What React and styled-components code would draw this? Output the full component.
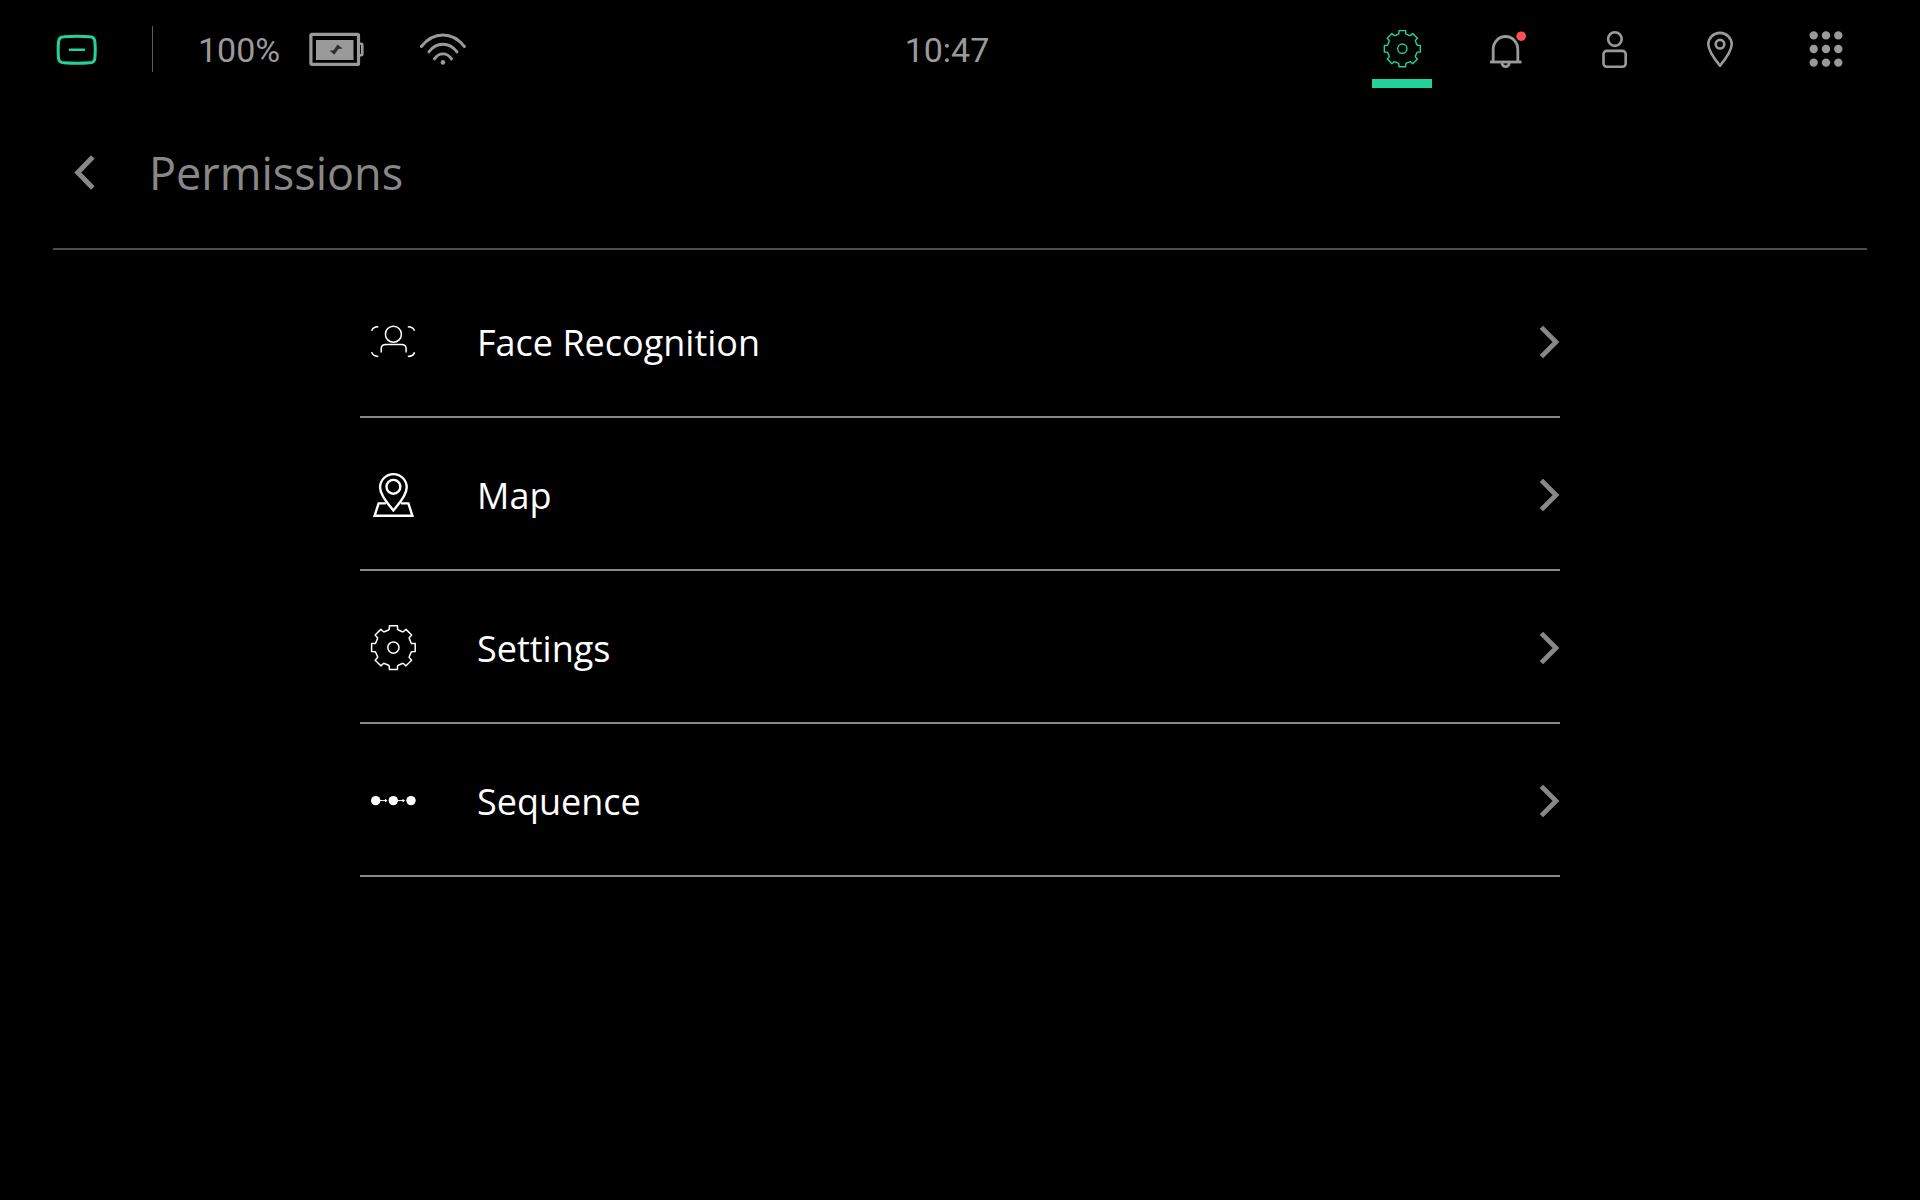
import React from "react";
import styled, { createGlobalStyle, css } from "styled-components";

const colors = {
  accent: "#24d39b",
  icon: "#9a9a9a",
  muted: "#888888",
  alert: "#ff4f4f",
};

const GlobalStyle = createGlobalStyle`
  *, *::before, *::after { box-sizing: border-box; }
  body {
    margin: 0;
    background: #000;
    color: #fff;
    font-family: "Open Sans", "Noto Sans", sans-serif;
  }
  svg { display: block; flex: none; }
`;

const plainButton = css`
  margin: 0;
  padding: 0;
  border: 0;
  background: none;
  color: inherit;
  font: inherit;
  cursor: pointer;
`;

const StatusBar = styled.header`
  display: grid;
  grid-template-columns: 1fr auto 1fr;
  align-items: center;
  height: 98px;
  padding: 0 64px 0 38px;
  color: ${colors.icon};
`;

const StatusGroup = styled.div`
  display: flex;
  align-items: center;
`;

const Reading = styled.span`
  padding-top: 2px;
  font-family: Roboto, sans-serif;
  font-size: 34px;
  line-height: 40px;
`;

const HomeButton = styled.button`
  ${plainButton}
  display: grid;
  place-items: center;
  width: 78px;
  height: 98px;
  color: ${colors.accent};
`;

const Divider = styled.span`
  width: 1px;
  height: 46px;
  margin: 0 45px 0 36px;
  background: #5a5a5a;
`;

const Indicators = styled.div`
  display: flex;
  align-items: center;
  gap: 56px;
`;

const Battery = styled.div`
  display: flex;
  align-items: center;
  gap: 29px;
`;

const NavBar = styled.nav`
  display: flex;
  justify-content: flex-end;
  gap: 46px;
`;

const NavButton = styled.button`
  ${plainButton}
  position: relative;
  display: grid;
  place-items: center;
  width: 60px;
  height: 98px;
  color: ${(p) => (p.$active ? colors.accent : "inherit")};

  &::after {
    content: "";
    display: ${(p) => (p.$active ? "block" : "none")};
    position: absolute;
    inset: auto 0 10px;
    height: 9px;
    background: currentColor;
  }
`;

const TitleBar = styled.div`
  display: flex;
  align-items: center;
  gap: 32px;
  height: 152px;
  margin: 0 53px;
  border-bottom: 2px solid #4d4d4d;
  color: ${colors.muted};
`;

const BackButton = styled.button`
  ${plainButton}
  display: grid;
  place-items: center;
  width: 64px;
  height: 64px;
`;

const Title = styled.h1`
  margin: 0;
  font-size: 45px;
  font-weight: 400;
  line-height: 64px;
`;

const List = styled.ul`
  max-width: 1200px;
  margin: 15px auto 0;
  padding: 0;
  list-style: none;
`;

const Item = styled.li`
  border-bottom: 2px solid ${colors.muted};
`;

const ItemButton = styled.button`
  ${plainButton}
  display: flex;
  align-items: center;
  gap: 61px;
  width: 100%;
  height: 151px;
  padding: 2px 0 0 10px;
  text-align: left;
`;

const ItemLabel = styled.span`
  flex: 1;
  padding-top: 2px;
  font-size: 36px;
  line-height: 48px;
`;

const Chevron = styled.svg`
  color: ${colors.muted};
`;

const round = (n) => Math.round(n * 100) / 100;

const gearTooth = [
  [-4.9, -17.6],
  [-4.2, -18.2],
  [-4, -21.8],
  [4, -21.8],
  [4.2, -18.2],
  [4.9, -17.6],
];

const gearPath =
  "M" +
  Array.from({ length: 8 }, (_, i) => {
    const a = (i * Math.PI) / 4;
    return gearTooth
      .map(([x, y]) => [
        round(x * Math.cos(a) - y * Math.sin(a)),
        round(x * Math.sin(a) + y * Math.cos(a)),
      ])
      .join("L");
  }).join("L") +
  "Z";

function GearIcon({ size, stroke }) {
  return (
    <svg width={size} height={size} viewBox="-23.4 -22.6 46 46" fill="none" stroke="currentColor" strokeWidth={stroke} strokeLinejoin="round" aria-hidden="true">
      <path d={gearPath} />
      <circle r="5.6" />
    </svg>
  );
}

function HomeIcon() {
  return (
    <svg width="42" height="32" viewBox="0 0 42 32" fill="none" stroke="currentColor" strokeWidth="3" strokeLinecap="round" aria-hidden="true">
      <path d="M8 3.8Q21 2.8 34 3.8Q38.6 4 38.9 9Q39.6 17 38.9 25Q38.6 29.6 34 29.8Q21 30.8 8 29.8Q2.8 29.6 2.5 25Q1.8 17 2.5 9Q2.8 4 8 3.8Z" />
      <path d="M14 16.8h14" strokeWidth="2.6" />
    </svg>
  );
}

function BatteryIcon() {
  return (
    <svg width="55" height="34" viewBox="0 0 55 34" fill="none" stroke="currentColor" role="img" aria-label="Charging">
      <rect x="1.9" y="2.4" width="47.6" height="30" rx="1" strokeWidth="3.2" />
      <rect x="7" y="8" width="37.5" height="20" fill="currentColor" stroke="none" />
      <path d="M50.5 11.7h1.8q1 0 1 1v9.6q0 1-1 1h-1.8" strokeWidth="2.6" />
      <path d="M28.5 12.4L33.6 16.4L29.4 17L25.4 22.8L20.6 18.8L24.6 18.2Z" fill="#303030" stroke="none" />
    </svg>
  );
}

function WifiIcon() {
  return (
    <svg width="46" height="38" viewBox="0 0 46 38" fill="none" stroke="currentColor" strokeWidth="2.9" strokeLinecap="round" role="img" aria-label="Wi-Fi connected">
      <path d="M1.4 16.5Q10.5 5 22.9 5T44.4 16.5" />
      <path d="M8.9 21.9Q14.5 14.2 22.9 14.2T37 21.9" />
      <path d="M14.5 28.9Q17.7 23.9 22.9 23.9T31.5 28.9" />
      <circle cx="22.9" cy="32.4" r="2.3" fill="currentColor" stroke="none" />
    </svg>
  );
}

function BellIcon() {
  return (
    <svg width="36" height="38" viewBox="0 0 36 38" fill="none" stroke="currentColor" strokeWidth="2.8" aria-hidden="true">
      <path d="M3.2 32V19.3a12.3 12.8 0 0 1 24.6 0V32" />
      <path d="M0 32h31.5" />
      <path d="M11.9 32.8a3.7 3.8 0 0 0 7.4 0" />
      <circle cx="31.2" cy="6.2" r="4.8" fill={colors.alert} stroke="none" />
    </svg>
  );
}

function PersonIcon() {
  return (
    <svg width="26" height="38" viewBox="0 0 26 38" fill="none" stroke="currentColor" strokeWidth="2.6" aria-hidden="true">
      <circle cx="13.9" cy="9.1" r="6.8" />
      <rect x="2.5" y="20.9" width="22.2" height="15.8" rx="3.2" />
    </svg>
  );
}

function PinIcon() {
  return (
    <svg width="28" height="38" viewBox="0 0 28 38" fill="none" stroke="currentColor" strokeWidth="2.6" strokeLinejoin="round" aria-hidden="true">
      <path d="M14 35.8C10.5 31.5 2.3 21.5 2.3 14.3a11.7 11.4 0 0 1 23.4 0C25.7 21.5 17.5 31.5 14 35.8Z" />
      <circle cx="14" cy="14.2" r="4.3" />
    </svg>
  );
}

function AppsIcon() {
  return (
    <svg width="34" height="38" viewBox="0 0 34 38" fill="currentColor" aria-hidden="true">
      {[5.4, 19, 32.6].map((y) =>
        [4.7, 17, 29.3].map((x) => <circle key={`${x}-${y}`} cx={x} cy={y} r="4.2" />)
      )}
    </svg>
  );
}

function BackIcon() {
  return (
    <svg width="22" height="36" viewBox="0 0 22 36" fill="none" stroke="currentColor" strokeWidth="5" aria-hidden="true">
      <path d="M18.8 2L3.8 17.5L18.8 33" />
    </svg>
  );
}

function ForwardIcon() {
  return (
    <Chevron width="21" height="34" viewBox="0 0 21 34" fill="none" stroke="currentColor" strokeWidth="4.8" aria-hidden="true">
      <path d="M2.4 2.4L17 17L2.4 31.6" />
    </Chevron>
  );
}

function FaceIcon() {
  return (
    <svg width="46" height="34" viewBox="0 0 46 34" fill="none" stroke="currentColor" strokeWidth="1.5" aria-hidden="true">
      <path d="M1.7 5.8Q2.6 1.8 8.3 1.7M37.8 1.7Q43.5 1.8 44.5 5.8M1.7 27.2Q2.6 31.3 8.3 31.4M37.8 31.4Q43.5 31.3 44.5 27.2" />
      <circle cx="23.4" cy="9.2" r="8" />
      <path d="M11.2 27.4V23.5Q11.2 19.4 16 19.4H31.4Q36.1 19.4 36.1 23.5V27.4" />
    </svg>
  );
}

function MapIcon() {
  return (
    <svg width="46" height="46" viewBox="0 0 46 46" fill="none" stroke="currentColor" strokeWidth="2.4" aria-hidden="true">
      <path d="M23.4 38.4C18.5 32.5 10.1 23.5 10.1 15.4a13.3 13.3 0 0 1 26.6 0C36.7 23.5 28.3 32.5 23.4 38.4Z" />
      <circle cx="23.4" cy="14.8" r="6.9" />
      <path d="M15.8 31.4H8.6L4.6 43.8H42.4L38.4 31.4H31" />
    </svg>
  );
}

function SequenceIcon() {
  return (
    <svg width="46" height="12" viewBox="0 0 46 12" fill="currentColor" aria-hidden="true">
      <circle cx="5.7" cy="5.6" r="4.7" />
      <circle cx="23.3" cy="5.6" r="4.7" />
      <circle cx="41" cy="5.6" r="4.7" />
      <path d="M10 5.6h6.6M27.6 5.6h6.6" stroke="currentColor" strokeWidth="1" />
      <path d="M15 3.8l2.4 1.8l-2.4 1.8zM32.6 3.8l2.4 1.8l-2.4 1.8z" />
    </svg>
  );
}

const navItems = [
  { label: "Settings", icon: <GearIcon size={38} stroke={1.7} />, active: true },
  { label: "Notifications", icon: <BellIcon /> },
  { label: "Account", icon: <PersonIcon /> },
  { label: "Location", icon: <PinIcon /> },
  { label: "Apps", icon: <AppsIcon /> },
];

const permissions = [
  { label: "Face Recognition", icon: <FaceIcon /> },
  { label: "Map", icon: <MapIcon /> },
  { label: "Settings", icon: <GearIcon size={46} stroke={1.5} /> },
  { label: "Sequence", icon: <SequenceIcon /> },
];

export default function App() {
  return (
    <>
      <GlobalStyle />
      <StatusBar>
        <StatusGroup>
          <HomeButton type="button" aria-label="Home">
            <HomeIcon />
          </HomeButton>
          <Divider />
          <Indicators>
            <Battery>
              <Reading>100%</Reading>
              <BatteryIcon />
            </Battery>
            <WifiIcon />
          </Indicators>
        </StatusGroup>
        <Reading as="time">10:47</Reading>
        <NavBar>
          {navItems.map((item) => (
            <NavButton key={item.label} type="button" aria-label={item.label} $active={item.active}>
              {item.icon}
            </NavButton>
          ))}
        </NavBar>
      </StatusBar>
      <main>
        <TitleBar>
          <BackButton type="button" aria-label="Back">
            <BackIcon />
          </BackButton>
          <Title>Permissions</Title>
        </TitleBar>
        <List>
          {permissions.map((item) => (
            <Item key={item.label}>
              <ItemButton type="button">
                {item.icon}
                <ItemLabel>{item.label}</ItemLabel>
                <ForwardIcon />
              </ItemButton>
            </Item>
          ))}
        </List>
      </main>
    </>
  );
}
